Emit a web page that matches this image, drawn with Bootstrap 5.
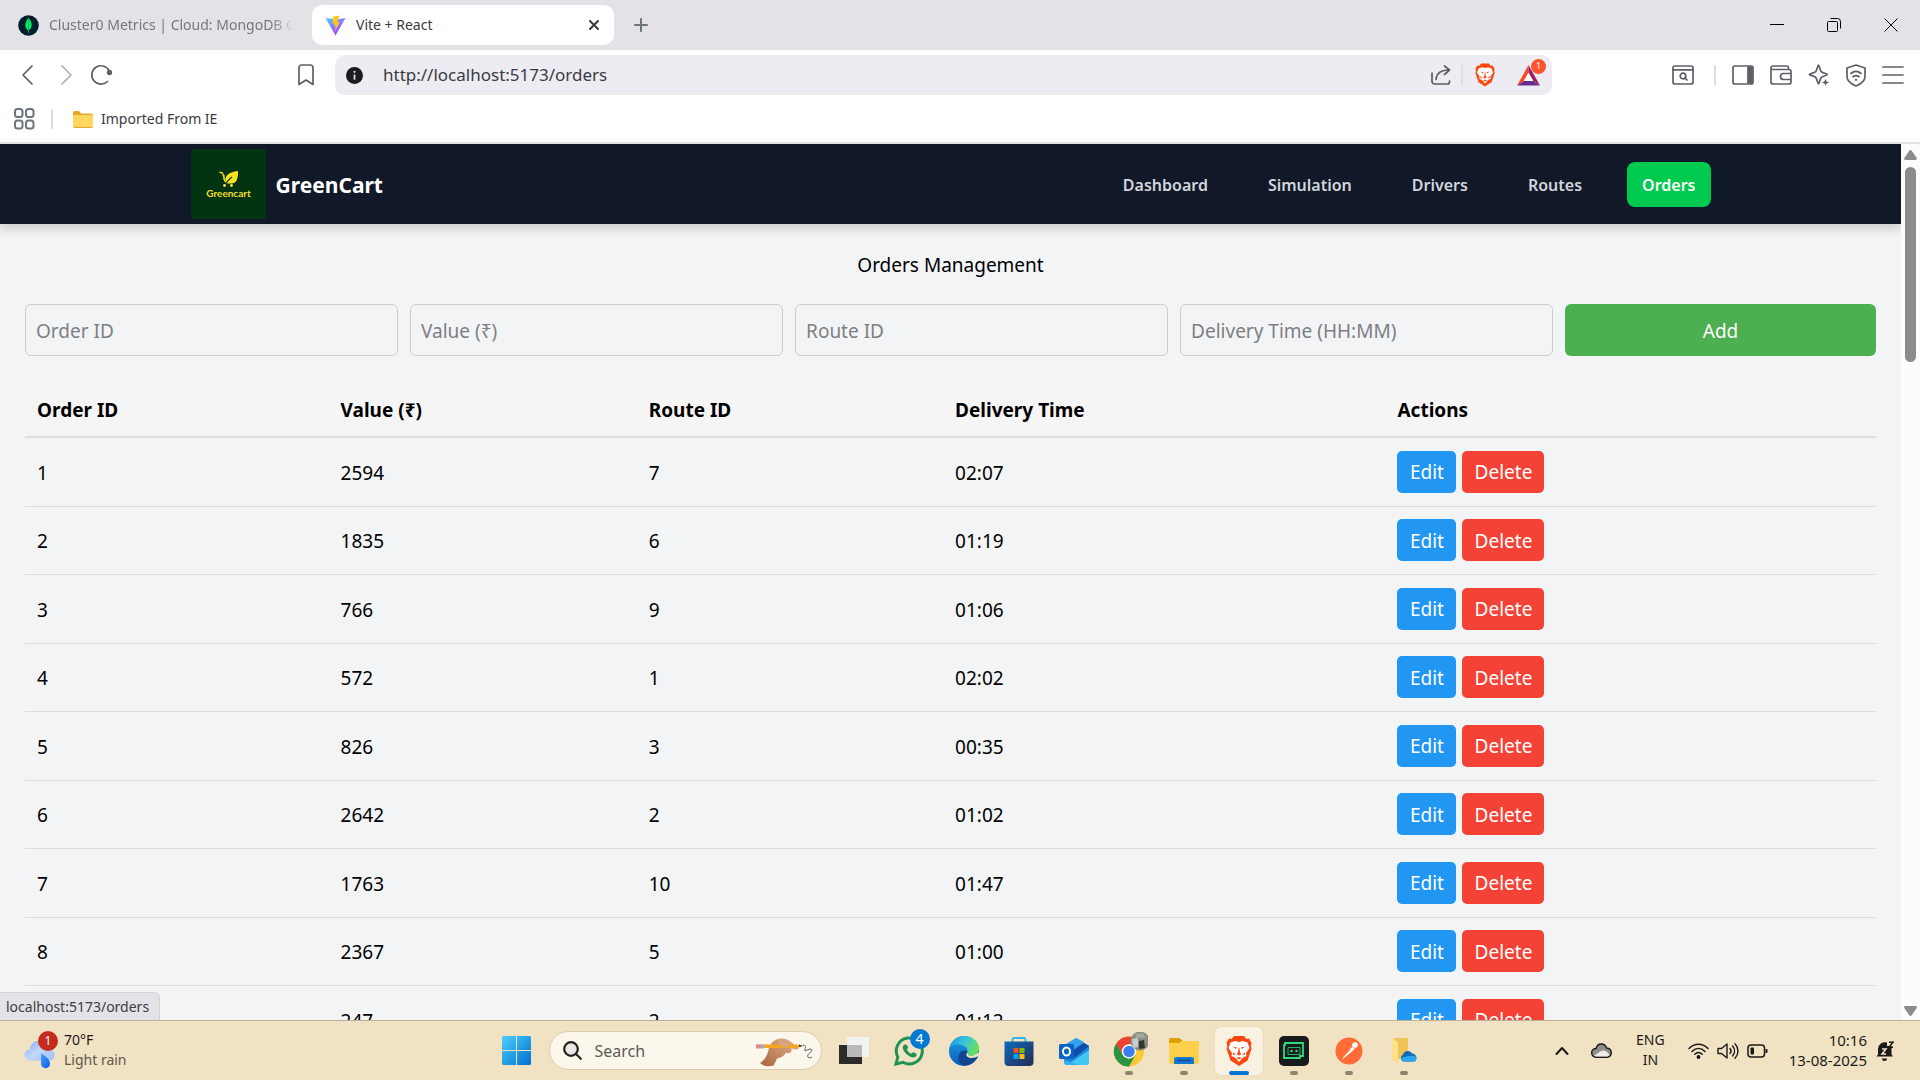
<!DOCTYPE html>
<html lang="en">
<head>
<meta charset="utf-8">
<meta name="viewport" content="width=device-width, initial-scale=1">
<title>Vite + React</title>
<link href="https://cdn.jsdelivr.net/npm/bootstrap@5.3.0/dist/css/bootstrap.min.css" rel="stylesheet">
<style>
:root{--chrome:#e3e2e7;--ink:#5c6066;--page:#f3f4f6}
body{font-family:"Noto Sans","Open Sans",sans-serif;font-size:19px;line-height:28px;color:#000;background:var(--page)}
svg{display:block;flex:none}
button{font-family:inherit}
.plain{background:none;border:0;padding:0;color:inherit;display:flex;align-items:center;justify-content:center}
.stroke{fill:none;stroke:currentColor;stroke-width:2;stroke-linecap:round;stroke-linejoin:round}
.thin{stroke-width:1.700}

/* browser chrome */
.tabstrip{height:50px;background:var(--chrome);font-size:14px;line-height:20px}
.tab-idle{width:294px;padding-left:18px;gap:10px;color:#77767c}
.tab-idle span{white-space:nowrap;overflow:hidden;-webkit-mask-image:linear-gradient(90deg,#000 90%,transparent)}
.tab-live{width:302px;height:40px;border-radius:10px;padding:0 14px 0 13px;gap:10px;margin-left:18px;color:#3b3b40;background:#fff}
.win-ctl{gap:43px;padding-right:22px;color:#111}
.toolbar{height:50px;background:#fff;color:var(--ink)}
.tool-left{width:335px;padding:0 21px}
.tool-right{width:368px;padding-right:16px}
.omni{height:40px;background:#edecf2;border-radius:10px;padding:0 12px 0 11px}
.omni input{background:none;border:0;outline:0;color:#3a3a42;font-size:17px;padding:0;margin-left:20px}
.omni-sep{margin:0 12px 0 10px}
.shield{margin-right:22px}
.vline{width:2px;height:20px;background:#dddce2}
.bookmarks{height:44px;background:#fff;border-bottom:2px solid var(--chrome);padding:0 15px 4px 14px;font-size:14px;color:#3b3b40}
.count{position:absolute;border-radius:50%;color:#fff;display:flex;align-items:center;justify-content:center}
.count-bat{width:15px;height:15px;font-size:9px;background:#fb542b;right:-6px;top:-6px}

/* page */
.viewport{min-height:0;flex:1 1 0}
.site-nav{height:80px;background:#111827;box-shadow:0 5px 10px rgba(0,0,0,.16);z-index:1}
.site-wrap{max-width:1520px;width:100%;margin:0 auto}
.logo-box{width:75px;height:70px;background:#033412}
.brand-link{gap:10px}
.brand-text{font-size:21px;font-weight:700;color:#fff;padding-top:2px}
.site-links{gap:30px}
.site-link{font-size:16px;font-weight:600;color:#d1d5dc;padding:2px 15px 0;height:45px;border-radius:8px;display:flex;align-items:center;text-decoration:none}
.site-link.active{background:#00c950;color:#fff}
.orders{padding:27px 25px 0}
.orders h1{font-size:19px;line-height:28px;font-weight:400;margin:0 0 25px;text-align:center}
.entry{display:grid;grid-template-columns:repeat(4,6fr) 5fr;gap:12px;margin-bottom:24px}
.entry input{min-width:0;height:52px;border:1px solid #ccc;border-radius:6px;background:none;padding:2px 10px 0;color:#000}
.entry input::placeholder{color:#7d7f83}
.entry button{height:52px;border:0;border-radius:6px;background:#4caf50;color:#fff;padding:2px 0 0}
.grid-table{width:100%;table-layout:fixed;border-collapse:separate;border-spacing:0}
.grid-table th{height:58px;background:#f5f5f5;border-bottom:2px solid #ddd;padding:4px 12px 0;font-weight:700}
.grid-table td{height:68px;border-bottom:1px solid #ddd;padding:1px 12px 0}
.grid-table tbody tr:nth-child(odd) td{height:69px}
.act{height:42px;border:0;border-radius:5px;color:#fff;padding:1px 0 0;vertical-align:middle;margin-top:-2px}
.act-edit{background:#2196f3;width:59px}
.act-del{background:#f44336;width:82px;margin-left:6px}
.scroller{flex:none;width:19px;background:#fcfcfc;padding:6px 0 4px;color:#8b8b8b}
.thumb{width:11px;height:195px;border-radius:6px;background:#8b8b8b;margin-top:7px}
.status{position:absolute;left:0;bottom:0;z-index:2;height:28px;padding:0 10px 0 6px;background:#e3e2e7;border:1px solid #d2d1d6;border-width:1px 1px 0 0;border-radius:0 6px 0 0;font-size:14px;line-height:28px;color:#3d3d42}

/* taskbar */
.taskbar{flex:none;height:60px;background:#f1e2c3;border-top:1px solid #bdb19b;display:grid;grid-template-columns:1fr auto 1fr;font-size:14px;line-height:20px;color:#1b1a18}
.cell{width:48px;height:48px;position:relative;border-radius:6px}
.cell.on{background:#f9f1e2;box-shadow:0 0 1px #c9b994}
.cell.run::after,.cell.on::after{content:"";position:absolute;bottom:0;left:20px;width:8px;height:4px;border-radius:2px;background:#8d836f}
.cell.on::after{left:14px;width:20px;background:#0078d4}
.find{width:273px;height:39px;border-radius:20px;background:#fcf7ec;border:1px solid #dccdab;padding:0 7px 0 13px;margin:0 8px}
.find input{background:none;border:0;outline:0;font-size:16px;padding:0;margin-left:13px;min-width:0;color:#222}
.find input::placeholder{color:#5e5a52}
.count-wa{width:20px;height:20px;background:#0078d4;font-size:14px;right:3px;top:2px}
.count-wx{width:20px;height:20px;background:#c42b1c;font-size:12px;left:14px;top:-1px}
.dock{gap:7px}
.mild{color:#5f584b}
.two-line{padding-bottom:2px}
.tray{padding-right:25px}
.tray-cloud{margin-left:22px}
.lang{margin:0 23px 0 24px}
.clock{font-size:15px;margin-left:21px;margin-right:9px}
</style>
</head>
<body class="vh-100 overflow-hidden d-flex flex-column">

<header class="flex-shrink-0">
  <div class="tabstrip d-flex align-items-center">
    <div class="tab-idle d-flex align-items-center">
      <svg width="21" height="21" viewBox="0 0 21 21"><circle cx="10.500" cy="10.500" r="10.300" fill="#001e2b"/><path d="M10.500 3c5 5.500 3.500 10 .3 12.200L10.700 18h-.5l-.2-2.800C6.500 12.500 6.300 8 10.500 3z" fill="#00ed64"/><path d="M10.500 5v12" stroke="#00a84a" stroke-width=".8"/></svg>
      <span>Cluster0 Metrics | Cloud: MongoDB Cloud</span>
    </div>
    <div class="tab-live d-flex align-items-center">
      <svg width="21" height="21" viewBox="0 0 21 21"><defs><linearGradient id="vb" x1="0" y1="0" x2=".7" y2="1"><stop stop-color="#41d1ff"/><stop offset="1" stop-color="#bd34fe"/></linearGradient></defs><path d="M.5 3 10.500 20.500 20.500 3l-9 1.600z" fill="url(#vb)"/><path d="m14.500.5-6.500 1.300-.5 7.200 2.300-.5-.6 3.200 1.600-.5-.8 5 5-9.700-2.800.5z" fill="#ffc61c"/></svg>
      <span>Vite + React</span>
      <button class="plain ms-auto" aria-label="Close tab"><svg width="12" height="12" viewBox="0 0 12 12" class="stroke"><path d="m2 2 8 8M10 2l-8 8"/></svg></button>
    </div>
    <button class="plain ms-3 ps-1 text-secondary" aria-label="New tab"><svg width="14" height="14" viewBox="0 0 14 14" class="stroke"><path d="M7 1v12M1 7h12"/></svg></button>
    <div class="win-ctl d-flex align-items-center ms-auto">
      <button class="plain" aria-label="Minimize"><svg width="14" height="14" viewBox="0 0 14 14"><path d="M0 6.500h14" stroke="#000"/></svg></button>
      <button class="plain" aria-label="Restore"><svg width="14" height="14" viewBox="0 0 14 14" fill="none" stroke="#000"><rect x=".5" y="3.500" width="10" height="10" rx="1"/><path d="M3.500.5h7a3 3 0 0 1 3 3v7"/></svg></button>
      <button class="plain" aria-label="Close"><svg width="14" height="14" viewBox="0 0 14 14" stroke="#000"><path d="m.5.5 13 13M13.500.5l-13 13"/></svg></button>
    </div>
  </div>

  <div class="toolbar d-flex align-items-center">
    <div class="tool-left d-flex align-items-center">
      <button class="plain" aria-label="Back"><svg width="14" height="20" viewBox="0 0 14 20" class="stroke thin"><path d="m11 1-9 9 9 9"/></svg></button>
      <button class="plain ms-4 opacity-50" aria-label="Forward"><svg width="14" height="20" viewBox="0 0 14 20" class="stroke thin"><path d="m3 1 9 9-9 9"/></svg></button>
      <button class="plain ms-3" aria-label="Reload"><svg width="24" height="22" viewBox="0 0 24 22" class="stroke thin"><path d="M18.500 17.500A9.200 9.200 0 1 1 20.500 7.500"/><circle cx="20.500" cy="8.500" r="1.800" fill="currentColor"/></svg></button>
      <button class="plain ms-auto" aria-label="Bookmark"><svg width="16" height="22" viewBox="0 0 16 22" class="stroke thin"><path d="M1 20.500V3.500a2.500 2.500 0 0 1 2.500-2.500h9A2.500 2.500 0 0 1 15 3.500v17l-7-4.500z"/></svg></button>
    </div>
    <div class="omni d-flex align-items-center flex-grow-1">
      <svg width="17" height="17" viewBox="0 0 17 17"><circle cx="8.500" cy="8.500" r="8.500" fill="#1c1b20"/><circle cx="8.500" cy="4.800" r="1.100" fill="#ddd"/><path d="M8.500 7.500v5.200" stroke="#ddd" stroke-width="1.800"/></svg>
      <input class="flex-grow-1" type="text" aria-label="Address" value="http://localhost:5173/orders">
      <button class="plain" aria-label="Share"><svg width="20" height="20" viewBox="0 0 20 20" class="stroke thin"><path d="M1 8v8.500A2.500 2.500 0 0 0 3.500 19h13a2 2 0 0 0 2-2v-1M5 14.500C5.500 8 9.500 5 18 5M13.500 1l5 4-5 4.500"/></svg></button>
      <div class="vline omni-sep"></div>
      <button class="plain shield" aria-label="Brave Shields"><svg width="20" height="24" viewBox="0 0 26 30"><use href="#lion"/></svg></button>
      <button class="plain position-relative" aria-label="Rewards"><svg width="23" height="21" viewBox="0 0 23 21"><path d="M11.500 0 0 20.500l7-4.500 4.500-8z" fill="#ff4724"/><path d="M11.500 0 23 20.500 16 16l-4.500-8z" fill="#9e1f63"/><path d="M0 20.500h23L16 16H7z" fill="#662d91"/><path d="M11.500 7.500 16.300 16H6.700z" fill="#fff"/></svg><span class="count count-bat">1</span></button>
    </div>
    <div class="tool-right d-flex align-items-center justify-content-end gap-3">
      <button class="plain" aria-label="Search tabs"><svg width="22" height="20" viewBox="0 0 22 20" class="stroke thin"><rect x="1" y="1" width="20" height="18" rx="2"/><path d="M1 4.800h20"/><circle cx="11" cy="11" r="2.800"/><path d="m13 13 2 2"/></svg></button>
      <div class="vline ms-1"></div>
      <button class="plain" aria-label="Sidebar"><svg width="22" height="20" viewBox="0 0 22 20" class="stroke thin"><rect x="1" y="1" width="20" height="18" rx="2"/><path d="M16 2h4v16h-4z" fill="currentColor"/></svg></button>
      <button class="plain" aria-label="Wallet"><svg width="22" height="20" viewBox="0 0 22 20" class="stroke thin"><path d="M18.500 4.500V3a2 2 0 0 0-2-2H3a2 2 0 0 0-2 2v14a2 2 0 0 0 2 2h16a2 2 0 0 0 2-2V6.500a2 2 0 0 0-2-2H2M21 8.500h-7.500a3 3 0 0 0 0 6H21"/></svg></button>
      <button class="plain" aria-label="Leo"><svg width="22" height="22" viewBox="0 0 22 22" class="stroke thin"><path d="M10.500 1.200c1 0 1.300 5 2.800 6.500s6 1.800 6 2.800-4.500 1.300-6 2.800-1.800 6.500-2.800 6.500-1.300-5-2.800-6.500-6.500-1.800-6.500-2.800 5-1.300 6.500-2.800 1.800-6.500 2.800-6.500z"/><path d="M17.500 14.500c.6 2.700 1 3.300 4 4-3 .6-3.400 1-4 3.500-.6-2.500-1-2.900-4-3.500 3-.7 3.400-1.300 4-4z" fill="currentColor" stroke="none"/></svg></button>
      <button class="plain" aria-label="VPN"><svg width="20" height="23" viewBox="0 0 20 23" class="stroke thin"><path d="M10 1 19 4v8.500c0 4-3 7-9 9.500-6-2.500-9-5.500-9-9.500V4zM5 9.500c3-2.500 7-2.500 10 0M7 12.800c2-1.500 4-1.500 6 0M9.500 15.800h1"/></svg></button>
      <button class="plain" aria-label="Menu"><svg width="22" height="18" viewBox="0 0 22 18" class="stroke thin"><path d="M1 1h20M1 9h20M1 17h20"/></svg></button>
    </div>
  </div>

  <div class="bookmarks d-flex align-items-center">
    <svg width="21" height="22" viewBox="0 0 21 22" class="stroke text-secondary"><rect x="1" y="1" width="7.500" height="8" rx="2.500"/><rect x="12" y="1" width="7.500" height="8" rx="2.500"/><rect x="1" y="12.500" width="7.500" height="8" rx="2.500"/><rect x="12" y="12.500" width="7.500" height="8" rx="2.500"/></svg>
    <div class="vline ms-3 me-3"></div>
    <svg class="ms-1" width="20" height="17" viewBox="0 0 20 17"><path d="M0 2a2 2 0 0 1 2-2h4l2 2.500h10a2 2 0 0 1 2 2V15a2 2 0 0 1-2 2H2a2 2 0 0 1-2-2z" fill="#e8a723"/><path d="M0 5.500C0 4.500.7 4 1.500 4h17c.8 0 1.500.5 1.500 1.500V14a2 2 0 0 1-2 2H2a2 2 0 0 1-2-2z" fill="#ffd75e"/></svg>
    <a class="ms-2 text-reset text-decoration-none" href="#">Imported From IE</a>
  </div>
</header>

<div class="viewport d-flex position-relative overflow-hidden">
  <div class="flex-grow-1 overflow-hidden">
    <nav class="site-nav position-relative d-flex align-items-center">
      <div class="site-wrap d-flex align-items-center">
        <a class="brand-link d-flex align-items-center text-decoration-none" href="#">
          <svg class="logo-box" viewBox="0 0 75 70"><path d="M28.500 23.500h1.800c1 0 1.300.6 1.600 1.600l2.300 7.500h9.500M33 26v5" stroke="#fde31b" stroke-width="1.300" fill="none"/><path d="M47 22c.3 6-1 12.500-6.500 12.500H35c-2.500-7 2-11.500 12-12.500z" fill="#fde31b"/><path d="M34.500 35c2-3.500 4-5 6.500-7" stroke="#033412" stroke-width="1.200" fill="none"/><circle cx="33.500" cy="36.500" r="1.400" fill="#fde31b"/><circle cx="40.500" cy="36.500" r="1.400" fill="#fde31b"/><text x="37.500" y="47.500" text-anchor="middle" font-family="Lato,sans-serif" font-weight="700" font-size="10" fill="#f3dd22">Greencart</text></svg>
          <span class="brand-text">GreenCart</span>
        </a>
        <div class="site-links d-flex ms-auto">
          <a class="site-link" href="#">Dashboard</a>
          <a class="site-link" href="#">Simulation</a>
          <a class="site-link" href="#">Drivers</a>
          <a class="site-link" href="#">Routes</a>
          <a class="site-link active" href="#" aria-current="page">Orders</a>
        </div>
      </div>
    </nav>
    <main class="orders">
      <h1>Orders Management</h1>
      <form class="entry">
        <input type="text" aria-label="Order ID" placeholder="Order ID">
        <input type="text" aria-label="Value" placeholder="Value (₹)">
        <input type="text" aria-label="Route ID" placeholder="Route ID">
        <input type="text" aria-label="Delivery Time" placeholder="Delivery Time (HH:MM)">
        <button type="button">Add</button>
      </form>
      <table class="grid-table">
        <colgroup><col style="width:16.400%"><col style="width:16.650%"><col style="width:16.550%"><col style="width:23.900%"><col></colgroup>
        <thead><tr><th>Order ID</th><th>Value (₹)</th><th>Route ID</th><th>Delivery Time</th><th>Actions</th></tr></thead>
        <tbody>
          <tr><td>1</td><td>2594</td><td>7</td><td>02:07</td><td><button class="act act-edit">Edit</button><button class="act act-del">Delete</button></td></tr>
          <tr><td>2</td><td>1835</td><td>6</td><td>01:19</td><td><button class="act act-edit">Edit</button><button class="act act-del">Delete</button></td></tr>
          <tr><td>3</td><td>766</td><td>9</td><td>01:06</td><td><button class="act act-edit">Edit</button><button class="act act-del">Delete</button></td></tr>
          <tr><td>4</td><td>572</td><td>1</td><td>02:02</td><td><button class="act act-edit">Edit</button><button class="act act-del">Delete</button></td></tr>
          <tr><td>5</td><td>826</td><td>3</td><td>00:35</td><td><button class="act act-edit">Edit</button><button class="act act-del">Delete</button></td></tr>
          <tr><td>6</td><td>2642</td><td>2</td><td>01:02</td><td><button class="act act-edit">Edit</button><button class="act act-del">Delete</button></td></tr>
          <tr><td>7</td><td>1763</td><td>10</td><td>01:47</td><td><button class="act act-edit">Edit</button><button class="act act-del">Delete</button></td></tr>
          <tr><td>8</td><td>2367</td><td>5</td><td>01:00</td><td><button class="act act-edit">Edit</button><button class="act act-del">Delete</button></td></tr>
          <tr><td>9</td><td>247</td><td>2</td><td>01:12</td><td><button class="act act-edit">Edit</button><button class="act act-del">Delete</button></td></tr>
        </tbody>
      </table>
    </main>
  </div>
  <div class="scroller d-flex flex-column align-items-center">
    <svg width="13" height="10" viewBox="0 0 13 10" fill="currentColor"><path d="M5.300.8a1.500 1.500 0 0 1 2.400 0L12.700 8c.5 1 0 2-1 2H1.300c-1 0-1.500-1-1-2z"/></svg>
    <div class="thumb"></div>
    <svg class="mt-auto" width="13" height="10" viewBox="0 0 13 10" fill="currentColor"><path d="M5.300 9.200a1.500 1.500 0 0 0 2.400 0L12.700 2c.5-1 0-2-1-2H1.300c-1 0-1.500 1-1 2z"/></svg>
  </div>
  <div class="status">localhost:5173/orders</div>
</div>

<footer class="taskbar align-items-center">
  <div class="d-flex align-items-center ps-4">
    <div class="position-relative">
      <svg width="32" height="38" viewBox="0 0 32 38"><defs><linearGradient id="cl" x1="0" y1="0" x2="1" y2="1"><stop stop-color="#7fa8f0"/><stop offset=".5" stop-color="#c3d7fa"/><stop offset="1" stop-color="#9dbdf2"/></linearGradient><linearGradient id="dr" x1="0" y1="0" x2="1" y2="1"><stop stop-color="#4aa3ff"/><stop offset="1" stop-color="#0a5be0"/></linearGradient></defs><path d="M6 28.500a5.500 5.500 0 0 1 0-11c0-5 4-9 9-9 4.500 0 8 2.500 9 7 4 .5 6.500 3 6.500 7s-2.500 6-6 6z" fill="url(#cl)"/><path d="M17 21c4 3 9 6 9 10.500a4.500 4.500 0 0 1-9 .5z" fill="url(#dr)"/></svg>
      <span class="count count-wx">1</span>
    </div>
    <div class="two-line ms-2"><div>70°F</div><div class="mild">Light rain</div></div>
  </div>

  <div class="d-flex align-items-center">
    <button class="plain cell" aria-label="Start"><svg width="29" height="29" viewBox="0 0 29 29"><defs><linearGradient id="wn" x1="0" y1="0" x2="1" y2="1"><stop stop-color="#4cd0fb"/><stop offset="1" stop-color="#006fd0"/></linearGradient></defs><path d="M1 0h13v14H0V1zM15 0h13l1 1v13H15zM0 15h14v14H1l-1-1zM15 15h14v13l-1 1H15z" fill="url(#wn)"/></svg></button>
    <div class="find d-flex align-items-center">
      <svg width="19" height="19" viewBox="0 0 19 19" fill="#e9e7e4" stroke="#23211f" stroke-width="2.200" stroke-linecap="round"><circle cx="8" cy="8" r="6.800"/><path d="m13 13 4.800 4.800"/></svg>
      <input class="flex-grow-1" type="search" aria-label="Search" placeholder="Search">
      <svg width="58" height="32" viewBox="0 0 58 32"><defs><linearGradient id="hn" x1="1" y1="0" x2="0" y2="1"><stop stop-color="#e2b48f"/><stop offset="1" stop-color="#a9653f"/></linearGradient></defs><path d="M4 28c6-4 7-8 8.500-13C14 7 20 3 27 3.500c5 .5 9 4 12 7l4 3c-2 2-5 .5-8 0 2 3-2 6-5 4-3 5-6 5-9 6-1 3-3 5-3 7-5 1.500-10 1.200-14-2.500z" fill="url(#hn)"/><path d="M2 9.500h39l6 1.500-6 2H2z" fill="#f5a623"/><path d="M0 9.500h5v4H0z" fill="#e7848f"/><path d="M5 9.500h3v4H5z" fill="#9fb3c0"/><path d="M22 5c5 0 9 3 12 6-3 3-7 1-10-1z" fill="#d9a67e"/><path d="m43 9.500 4 1.500-4 1z" fill="#333"/><path d="M47 10c5 1 1 4 2 6 2-1 6-3 7-1 0 2-6 5-4 7 1 1 2 1 4 0" fill="none" stroke="#555" stroke-width="1"/></svg>
    </div>
    <div class="dock d-flex">
      <button class="plain cell" aria-label="Task view"><svg width="30" height="28" viewBox="0 0 30 28"><path d="M0 8h23v19H0z" fill="#2b2b2b"/><path d="M8 0h22v20H8z" fill="#f3f3f4"/><path d="M8 8h15v12H8z" fill="#bababa"/></svg></button>
      <button class="plain cell" aria-label="WhatsApp"><svg width="30" height="30" viewBox="0 0 30 30"><path d="M2 28l1.800-7A13 13 0 1 1 9 26.300z" fill="none" stroke="#1f9150" stroke-width="3"/><path d="M10.500 8.500c-3 1.500-2 6 2.500 10s8.500 3.500 9.500 1c.8-2-2-3-3.500-3.300l-1.800 1.500c-2-.8-3.500-2.500-4.300-4.300l1.300-1.600c-.3-1.500-1.500-4-3.700-3.300z" fill="#1f9150"/></svg><span class="count count-wa">4</span></button>
      <button class="plain cell" aria-label="Edge"><svg width="30" height="30" viewBox="0 0 30 30"><defs><linearGradient id="e1" x1="0" y1="0" x2="1" y2=".4"><stop stop-color="#1a8fe0"/><stop offset=".5" stop-color="#35c1e0"/><stop offset="1" stop-color="#66e060"/></linearGradient><linearGradient id="e2" x1="0" y1="0" x2="0" y2="1"><stop stop-color="#1e9fe8"/><stop offset="1" stop-color="#0a5bb8"/></linearGradient></defs><circle cx="15" cy="15" r="15" fill="url(#e2)"/><path d="M.5 12C2 5 8 0 15 0c9 0 15 6 15 12 0 5-4 8-8 8-3.500 0-5-1.500-4-3 1-2 1-5-3-7C10 7.500 3 8.500.5 12z" fill="url(#e1)"/><path d="M17.800 17.500c-1.500 2 1 4.500 4.500 4.500 3 0 5-1 6-1.500.5 0 .5.500 0 1-2.300 4.500-8 8.500-13 8-6-1-8-8-4-13 2-2.500 5-2.500 7-1z" fill="#12468f"/><path d="M17.800 17.500c-1.500 2 1 4.500 4.500 4.500 3 0 5-1 6-1.500l1.700-1v-3l-7 3.500c-3.500 0-5-1.500-4-3z" fill="#f1e2c3"/></svg></button>
      <button class="plain cell" aria-label="Store"><svg width="30" height="30" viewBox="0 0 30 30"><defs><linearGradient id="st" x1="0" y1="0" x2="1" y2="1"><stop stop-color="#0c6cbd"/><stop offset="1" stop-color="#262a55"/></linearGradient></defs><path d="M8.500 6V3.500A1.500 1.500 0 0 1 10 2h10a1.500 1.500 0 0 1 1.500 1.500V6" fill="none" stroke="#2fb7ee" stroke-width="1.800"/><path d="M.5 5.500h29V26a4 4 0 0 1-4 4h-21a4 4 0 0 1-4-4z" fill="url(#st)"/><path d="M9.500 12H14.500v5h-5z" fill="#f25022"/><path d="M15.500 12h5v5h-5z" fill="#7fba00"/><path d="M9.500 18h5v5h-5z" fill="#00a4ef"/><path d="M15.500 18h5v5h-5z" fill="#ffb900"/></svg></button>
      <button class="plain cell" aria-label="Outlook"><svg width="30" height="28" viewBox="0 0 30 28"><path d="M4 9 17 1l13 8v15a4 4 0 0 1-4 4H9a4 4 0 0 1-4-4z" fill="#1c87db"/><path d="M14 3l3-2 8 4-13 9-6-5z" fill="#36a3ee"/><path d="M30 9 15 21l-3-6 13-9z" fill="#0f4da8"/><path d="M30 13v12a3 3 0 0 1-3 3H8l22-15z" fill="#43c8f5"/><path d="M5 23l15 5H8c-2 0-3-2-3-3z" fill="#2fb3f0"/><rect x="0" y="7" width="15" height="15" rx="1.500" fill="#0c64c0"/><ellipse cx="7.500" cy="14.500" rx="3.500" ry="4" fill="none" stroke="#fff" stroke-width="2"/></svg></button>
      <button class="plain cell run" aria-label="Chrome"><svg width="38" height="38" viewBox="0 0 38 38"><circle cx="19" cy="19.500" r="15" fill="#fcc934"/><path d="M6 12a15 15 0 0 1 26 0H19z" fill="#ea4335"/><path d="M6 12A15 15 0 0 0 19 34.500L25.500 23H13z" fill="#2c9443"/><path d="M6 12h13v7l-6 4z" fill="#ea4335"/><path d="M6 12 12.500 23.200 19 34.500A15 15 0 0 1 6 12z" fill="#2c9443"/><circle cx="19" cy="19.500" r="7.200" fill="#fff"/><circle cx="19" cy="19.500" r="5.700" fill="#3b7ded"/><circle cx="30" cy="9" r="9.500" fill="#8b8c83"/><path d="M22 7l6-1v9l-5 1z" fill="#c3cccd"/><path d="M29 9l5-1 1 8-6 1z" fill="#34352f"/><path d="M25 2l8-1 3 5h-10z" fill="#a4a59e"/></svg></button>
      <button class="plain cell run" aria-label="File Explorer"><svg width="30" height="28" viewBox="0 0 30 28"><path d="M0 3a2 2 0 0 1 2-2h8l4 3h14a2 2 0 0 1 2 2v6H0z" fill="#dfa000"/><path d="M0 6h10l3-2h15a2 2 0 0 1 2 2v19a2 2 0 0 1-2 2H2a2 2 0 0 1-2-2z" fill="#ffd04a"/><path d="M5 27v-5a2 2 0 0 1 2-2h16a2 2 0 0 1 2 2v5z" fill="#1478ce"/><path d="M8 23.500h14" stroke="#0b4f93" stroke-width="1.500"/></svg></button>
      <button class="plain cell on" aria-label="Brave"><svg width="26" height="30" viewBox="0 0 26 30"><g id="lion"><path d="M8 0h10l2.500 3 2.500-.5L25.500 7l-.7 3 .8 2.500-4 12L13 30l-8.500-5.500-4-12L1.300 10 .5 7 3 2.500l2.500.5z" fill="#fb4710"/><path d="M4.500 6.500 9 5l4 1 4-1 4.500 1.500 2 5.500-3.500 5 .5 3-3.500 1.500-4 4.500-4-4.500L5.500 20l.5-3-3.500-5z" fill="#fff"/><path d="m7 10.500 4 1-1 1.500zM19 10.500l-4 1 1 1.500zM12.600 12h.8l.6 4.500 1.500 1.500-2.500 1.500-2.500-1.500 1.500-1.500zM7 16l3 3.500-3-1zM19 16l-3 3.500 3-1zM10.500 22l2.500-1 2.500 1-2.500 1.500z" fill="#fb4710"/></g></svg></button>
      <button class="plain cell run" aria-label="Terminal"><svg width="30" height="30" viewBox="0 0 30 30"><rect width="30" height="30" rx="5" fill="#181b1d"/><path d="M6 7h18v13h-3v2H5V9h1z" fill="none" stroke="#2bdb7c" stroke-width="1.800"/><path d="M9 11.500h12v7H9z" fill="none" stroke="#2bdb7c" stroke-width=".8"/><circle cx="12.500" cy="15" r="1.200" fill="#2bdb7c"/><circle cx="17.500" cy="15" r="1.200" fill="#2bdb7c"/></svg></button>
      <button class="plain cell run" aria-label="Postman"><svg width="28" height="28" viewBox="0 0 28 28"><circle cx="14" cy="14" r="13.500" fill="#ff6c37"/><circle cx="20" cy="8" r="2.800" fill="#fff"/><path d="M17.500 9.500 20 12l-6 5-4 3-3 3 2.500-5z" fill="#fff"/><path d="m19 12 1 3-2 2M9 19l6-6" stroke="#ff6c37" stroke-width=".8" fill="none"/></svg></button>
      <button class="plain cell run" aria-label="OneDrive folder"><svg width="26" height="28" viewBox="0 0 26 28"><path d="M3 1h14v21H6z" fill="#f0c456"/><path d="M1 1l6 4v22l-5-3.500a2 2 0 0 1-1-2z" fill="#ffe08a"/><path d="M12 24.500a4 4 0 0 1 0-7c1-4 7-5 9-1 4 0 6 5 3 8z" fill="#0f6cbd"/><path d="M10 23c0-3 4-3 7-4 3 0 6-1 8 1 1.500 3-1 4.500-3 4.500H12z" fill="#29a8f0"/></svg></button>
    </div>
  </div>

  <div class="tray d-flex align-items-center justify-content-end">
    <button class="plain" aria-label="Hidden icons"><svg width="14" height="10" viewBox="0 0 14 10" class="stroke"><path d="m1.500 8 5.500-6 5.500 6"/></svg></button>
    <svg class="tray-cloud" width="21" height="15" viewBox="0 0 21 15"><path d="M5 14.200A4.200 4.200 0 0 1 5 5.500C6.500-.5 14-.5 15.500 5c6 .2 6.500 9 .5 9.200z" fill="#8f8e8c" stroke="#1b1a18" stroke-width="1.400"/><path d="M3 12.500c3-1 6-5 9-5 3 0 5 2 6.500 4.500-1 1.500-2 1.500-3 1.500H5z" fill="#efece6"/></svg>
    <div class="two-line lang text-center">ENG<br>IN</div>
    <svg width="21" height="16" viewBox="0 0 21 16" fill="none" stroke="#1b1a18" stroke-width="1.500" stroke-linecap="round"><path d="M1 5.500c5.500-5.800 13.500-5.800 19 0M4 8.500c4-4 9-4 13 0M6.800 11.300c2.400-2.300 5-2.300 7.400 0"/><circle cx="10.500" cy="14" r="1.200" fill="#1b1a18"/></svg>
    <svg class="ms-2" width="22" height="18" viewBox="0 0 22 18" fill="none" stroke="#1b1a18" stroke-width="1.400" stroke-linecap="round" stroke-linejoin="round"><path d="M1 6.500v5h3.500L10 16V2L4.500 6.500zM13 6.500c1.300 1.500 1.300 3.500 0 5M15.500 4c2.700 3 2.700 7 0 10M18 1.800c4 4.200 4 10.200 0 14.400"/></svg>
    <svg class="ms-2" width="21" height="14" viewBox="0 0 21 14"><rect x="1" y="1" width="16.500" height="12" rx="3" fill="none" stroke="#1b1a18" stroke-width="1.500"/><rect x="3.500" y="3.500" width="3.500" height="7" rx="1" fill="#1b1a18"/><path d="M18.500 5h1a1 1 0 0 1 1 1v2a1 1 0 0 1-1 1h-1z" fill="#1b1a18"/></svg>
    <div class="two-line clock text-end">10:16<br>13-08-2025</div>
    <svg width="19" height="20" viewBox="0 0 19 20"><path d="M2 13.500V8a7 7 0 0 1 9-6.500V5h4.500v8.500l1.500 2H.5zM6 17.500h5a2.500 2.500 0 0 1-5 0z" fill="#1b1a18"/><path d="M6 8h4l-4 5h4" stroke="#f1e2c3" stroke-width="1.500" fill="none"/><path d="M13 1.200h4l-4 5h4" stroke="#1b1a18" stroke-width="1.500" fill="none"/></svg>
  </div>
</footer>

<script src="https://cdn.jsdelivr.net/npm/bootstrap@5.3.0/dist/js/bootstrap.bundle.min.js"></script>
</body>
</html>
